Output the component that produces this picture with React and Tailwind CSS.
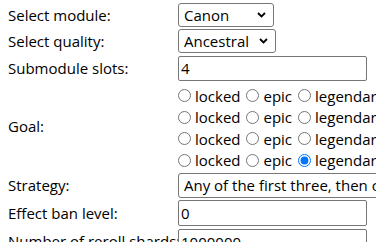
import React, { useState } from "react";

const modules = ["Canon", "Rifle", "Shotgun"];
const qualities = ["Ancestral", "Legendary", "Epic"];

const Chevron = () => (
    <svg width="9" height="6" viewBox="0 0 9 6" className="pointer-events-none absolute right-[8px] top-1/2 -translate-y-1/2">
        <path d="M1 1l3.5 3.5L8 1" fill="none" stroke="#000" strokeWidth="1.8" />
    </svg>
);

const Select = ({ value, onChange, options, className }) => (
    <div className="relative w-max">
        <select
            value={value}
            onChange={(e) => onChange(e.target.value)}
            className={`appearance-none bg-white border border-[#767676] rounded-[3px] pl-[5px] outline-none ${className}`}
        >
            {options.map((o) => (
                <option key={o} value={o}>{o}</option>
            ))}
        </select>
        <Chevron />
    </div>
);

const App = () => {
    const [module, setModule] = useState("Canon");
    const [quality, setQuality] = useState("Ancestral");
    const [slots, setSlots] = useState("4");
    const [goals, setGoals] = useState(["", "", "", "legendary"]);
    const [strategy, setStrategy] = useState("Any of the first three, then cheapest");
    const [banLevel, setBanLevel] = useState("0");
    const [shards, setShards] = useState("1000000");

    const setGoal = (i, v) => setGoals(goals.map((g, j) => (j === i ? v : g)));

    return (
        <div className="w-[376px] h-screen overflow-hidden bg-white text-black font-['Open_Sans',sans-serif] text-[15px]">
            <div className="grid grid-cols-[170px_auto] w-max gap-y-[2.5px] items-center pl-[8px] pt-[3px]">
                <span>Select module:</span>
                <Select value={module} onChange={setModule} options={modules} className="w-[96px] h-[23.5px]" />

                <span>Select quality:</span>
                <Select value={quality} onChange={setQuality} options={qualities} className="w-[98px] h-[24px]" />

                <span>Submodule slots:</span>
                <input
                    value={slots}
                    onChange={(e) => setSlots(e.target.value)}
                    className="w-[189px] h-[25px] border border-[#767676] rounded-[2px] pl-[2px] outline-none"
                />

                <span>Goal:</span>
                <div className="flex flex-col mt-[2px] -mb-[1px]">
                    {goals.map((g, i) => (
                        <div key={i} className="flex items-center h-[21.5px]">
                            {["locked", "epic", "legendary"].map((opt, k) => (
                                <label key={opt} className={`flex items-center gap-[4px] ${k > 0 ? "ml-[6px]" : ""}`}>
                                    <input
                                        type="radio"
                                        name={`goal-${i}`}
                                        checked={g === opt}
                                        onChange={() => setGoal(i, opt)}
                                        className="m-0 w-[13px] h-[13px]"
                                    />
                                    <span>{opt}</span>
                                </label>
                            ))}
                        </div>
                    ))}
                </div>

                <span>Strategy:</span>
                <Select
                    value={strategy}
                    onChange={setStrategy}
                    options={["Any of the first three, then cheapest", "Cheapest first"]}
                    className="h-[25px] pr-[30px]"
                />

                <span>Effect ban level:</span>
                <input
                    value={banLevel}
                    onChange={(e) => setBanLevel(e.target.value)}
                    className="w-[189px] h-[26px] border border-[#767676] rounded-[2px] pl-[2px] outline-none"
                />

                <span className="whitespace-nowrap">Number of reroll shards:</span>
                <input
                    value={shards}
                    onChange={(e) => setShards(e.target.value)}
                    className="relative w-[189px] h-[26px] bg-white border border-[#767676] rounded-[2px] pl-[2px] outline-none"
                />
            </div>
        </div>
    );
};

export default App;
